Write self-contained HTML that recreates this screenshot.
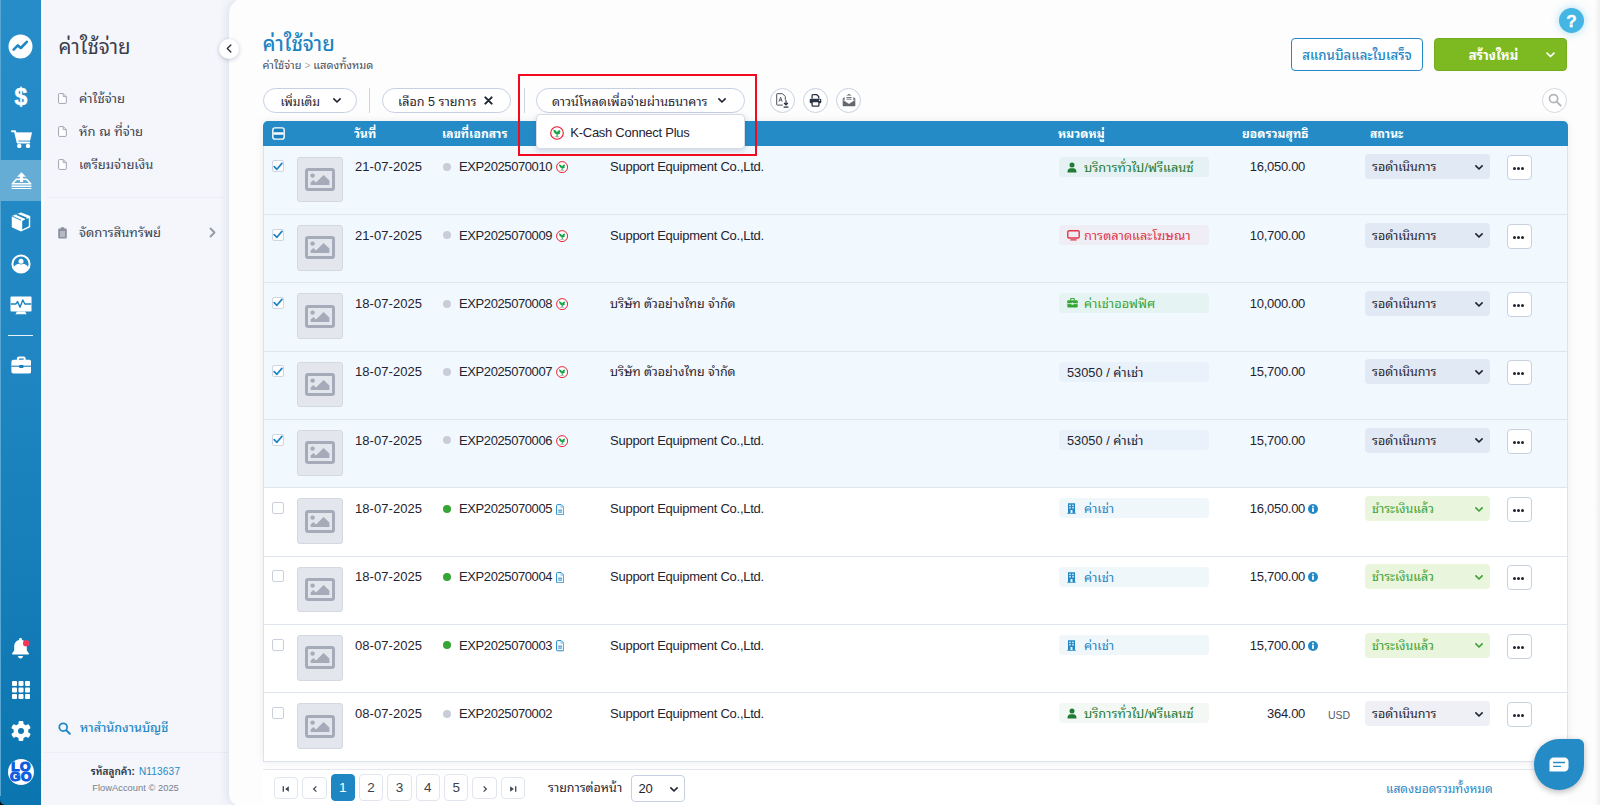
<!DOCTYPE html>
<html lang="th">
<head>
<meta charset="utf-8">
<title>ค่าใช้จ่าย</title>
<style>
*{box-sizing:border-box;margin:0;padding:0}
html,body{width:1600px;height:805px;overflow:hidden}
body{font-family:"Liberation Sans","Noto Sans Thai Looped","Noto Sans Thai","Sarabun","Loma",sans-serif;font-size:13px;color:#1f2430;background:#f4f6fb;position:relative}
svg{display:block}
/* ---------- rail ---------- */
#rail{position:absolute;left:0;top:0;width:42px;height:805px;background:linear-gradient(180deg,#268dc8 0%,#1f86c1 45%,#0b75af 100%);border-radius:0 0 0 5px}
#corner{position:absolute;left:0;top:797px;width:8px;height:8px;background:#000}
#rail .edge{position:absolute;left:0;top:0;width:1px;height:796px;background:#58a6d3}
#rail .active{position:absolute;left:0;top:160px;width:42px;height:41px;background:#66add6}
#rail .ic{position:absolute;left:0;width:41px;display:flex;justify-content:center}
#rail .sep{position:absolute;left:8px;width:25px;top:335px;height:1px;background:#e8f2f9}
/* ---------- sub nav ---------- */
#sub{position:absolute;left:41px;top:0;width:189px;height:805px;background:#f4f6fb}
#sub h2{position:absolute;left:17.5px;top:32.6px;font-size:20.4px;font-weight:400;color:#39404d;line-height:28px}
#sub .it{position:absolute;left:17px;margin-top:1px;height:20px;line-height:20px;font-size:13px;color:#3c4350;white-space:nowrap}
#sub .it svg{position:absolute;left:0;top:4px}
#sub .it span{position:absolute;left:21px;top:0}
#sub .hr{position:absolute;left:6px;right:6px;top:197px;height:1px;background:#eceff5}
#sub .hr2{position:absolute;left:0;right:0;top:752px;height:1px;background:#eceff5}
#sub .find{position:absolute;left:18px;top:718px;height:20px;line-height:20px;color:#2389c6;font-size:12.5px;white-space:nowrap}
#sub .find svg{position:absolute;left:-1px;top:3.5px}
#sub .find span{position:absolute;left:21px;font-weight:500}
#sub .cust{position:absolute;left:0;width:189px;top:764.5px;text-align:center;font-size:9.6px;line-height:14px;color:#2b303b;white-space:nowrap}
#sub .cust b{font-weight:600;font-size:10px}
#sub .cust a{color:#2389c6;margin-left:4px;letter-spacing:.2px;font-size:10px}
#sub .copy{position:absolute;left:0;width:189px;top:781px;text-align:center;font-size:9.4px;line-height:14px;color:#7a808c;white-space:nowrap}
/* ---------- main card ---------- */
#main{position:absolute;left:229px;top:-2px;width:1371px;height:807.5px;background:#fdfdfd;border-radius:16px 0 0 12px;box-shadow:-3px 0 8px rgba(60,80,120,.10)}
#strip{position:absolute;left:1594px;top:0;width:6px;height:805px;background:linear-gradient(90deg,rgba(250,250,250,0) 0%,#f5f5f5 70%,#eeeeee 100%)}
#collapse{position:absolute;left:219px;top:38.6px;width:20px;height:20px;border-radius:50%;background:#fff;box-shadow:0 1px 4px rgba(40,60,100,.28);display:flex;align-items:center;justify-content:center}
h1{position:absolute;left:262.5px;top:30px;font-size:20.1px;line-height:28px;font-weight:500;color:#1d84c3;white-space:nowrap}
#crumb{position:absolute;left:262.5px;top:57px;font-size:11px;line-height:16px;color:#4a505c;white-space:nowrap}
#crumb i{font-style:normal;color:#a9afbb;margin:0 3px;font-size:10px}
.pill{position:absolute;top:87.5px;height:25px;border:1px solid #c7d0e2;border-radius:13px;background:#fff;font-size:12.6px;line-height:23.5px;white-space:nowrap;color:#1f2430}
.pill span{position:absolute;top:2px}
.pill svg{position:absolute}
.vsep{position:absolute;top:87.5px;width:1px;height:25px;background:#ccd3df}
.circ{position:absolute;top:87.5px;width:25px;height:25px;border-radius:50%;border:1px solid #c7d0e2;background:#fff;display:flex;align-items:center;justify-content:center}
#scan{position:absolute;left:1291px;top:38px;width:132px;height:33px;border:1px solid #2389c6;border-radius:4px;background:#fff;color:#1f86c4;font-weight:500;font-size:13.2px;line-height:33.5px;text-align:center;white-space:nowrap}
#create{position:absolute;left:1434px;top:38px;width:133px;height:33px;border:1px solid #73ac1f;border-radius:4px;background:#7dba21;color:#fff;font-size:13px;font-weight:700;line-height:31px;white-space:nowrap}
#create span{position:absolute;left:0;top:1.4px;width:117px;text-align:center}
#create svg{position:absolute;left:110.5px;top:12.6px}
#help{position:absolute;left:1559px;top:8px;width:25px;height:25px;border-radius:50%;background:#45b5e4;box-shadow:0 0 8px rgba(69,181,228,.45);color:#fff;font-weight:700;font-size:17px;line-height:27px;text-align:center;-webkit-text-stroke:.4px #fff}
/* ---------- table ---------- */
#tbl{position:absolute;left:263px;top:121px;width:1305px;height:641px;border:1px solid #dde3ee;border-top:none;border-radius:5px 5px 0 0;box-shadow:0 0 8px rgba(0,0,0,.07);background:#fff}
#thead{position:absolute;left:263px;top:121px;width:1305px;height:25px;background:#248bc6;border-radius:5px 5px 0 0;color:#fff;font-weight:700;font-size:12.1px;line-height:25px}
#thead span{position:absolute;top:1.2px;white-space:nowrap}
.row{position:absolute;left:264px;width:1303px;border-top:1px solid #dfe5ee;background:#fff}
.row.first{border-top-color:transparent}
.row.sel{background:#f1f8fe}
.row>div{position:absolute}
.cb{left:8px;top:13.5px;width:12px;height:12px;border:1px solid #c9cfdb;border-radius:2px;background:#fff}
.cb.on{border-color:#cfd6e2}
.cb.on svg{position:absolute;left:0;top:0.5px}
.thumb{left:33px;top:10px;width:45.7px;height:45.6px;border:1px solid #d3d8e2;border-radius:3px;background:#e3e6ed;display:flex;align-items:center;justify-content:center}
.c{top:10.7px;height:20px;line-height:20px;font-size:13px;white-space:nowrap;color:#1f2430}
.date{left:91px;letter-spacing:.05px}
.dot{left:179px;top:16.2px;width:8px;height:8px;border-radius:50%}
.dot.gray{background:#c9cdd8}
.dot.green{background:#37a536}
.doc{left:195px;letter-spacing:-.4px}
.doc .kic{position:absolute;left:97.2px;top:4.1px}
.doc .dic{position:absolute;left:96.5px;top:4.5px}
.ven{left:346px;letter-spacing:-.25px}
.ven.th{letter-spacing:0;font-size:12.5px}
.cat{left:795px;top:10px;width:150px;height:20px;border-radius:4px;font-size:12.8px;line-height:21px;white-space:nowrap}
.cat svg{position:absolute;left:8px;top:5px}
.cat span{position:absolute;left:25px;top:0}
.cat.noic span{left:8px}
.amt{left:940px;width:101px;text-align:right;letter-spacing:-.3px}
.info{left:1044px;top:15.8px}
.usd{left:1064px;top:11.3px;font-size:10.5px;line-height:20px;color:#555c69}
.st{left:1101px;top:7.7px;width:125px;height:25px;border-radius:4px;font-size:12.5px;line-height:26.5px;white-space:nowrap}
.st span{position:absolute;left:7px;top:0}
.st .chev{position:absolute;left:110px;top:10.5px}
.st.pend{background:rgba(70,90,140,.09);color:#1f2430}
.st.paid{background:#eaf5de;color:#3aa335}
.more{left:1242.6px;top:8.5px;width:25px;height:25px;border:1px solid #c9d1e0;border-radius:4px;background:#fff}
.more i{position:absolute;top:11px;width:3px;height:3px;border-radius:50%;background:#1f2430}
.more i:nth-child(1){left:5.8px}.more i:nth-child(2){left:9.8px}.more i:nth-child(3){left:13.8px}
/* ---------- pagination ---------- */
#pgline{position:absolute;left:263px;top:769px;width:1305px;height:1px;background:#e3e7ef}
.pg{position:absolute;top:774px;width:24.5px;height:27px;border:1px solid #e1e5ee;border-radius:4px;background:#fff;font-size:13.5px;line-height:25.5px;text-align:center;color:#3c4350}
.pg.ar{top:777px;height:22px}
.pg.ar svg{top:-1.6px;left:-.5px}
.pg.on{background:#1f86c4;border-color:#1f86c4;color:#fff}
.pg svg{position:absolute;left:0;top:0}
#perpage{position:absolute;left:548px;top:778px;font-size:12.5px;line-height:20px;white-space:nowrap;color:#1f2430}
#psel{position:absolute;left:631.4px;top:775px;width:53.6px;height:26.5px;border:1px solid #c7d0e2;border-radius:4px;background:#fff;font-size:13px;line-height:26px}
#psel span{position:absolute;left:6px}
#psel svg{position:absolute;left:38px;top:10.5px}
#total{position:absolute;left:1386px;top:778.5px;font-size:12px;line-height:20px;color:#1f86c4;white-space:nowrap}
#chat{position:absolute;left:1534px;top:739px;width:50px;height:51px;border-radius:26px 6px 26px 26px;background:#258bc6;box-shadow:0 2px 6px rgba(0,0,0,.28);display:flex;align-items:center;justify-content:center}
/* ---------- dropdown + highlight ---------- */
#menu{position:absolute;left:536px;top:114px;width:209px;height:35px;border:1px solid #d5dbe7;border-radius:4px;background:#fff;box-shadow:0 2px 5px rgba(40,60,100,.18);font-size:13px;line-height:34px}
#menu svg{position:absolute;left:13px;top:11px}
#menu span{position:absolute;left:33.3px;top:.7px;white-space:nowrap;letter-spacing:-.27px}
#red{position:absolute;left:518px;top:74px;width:239px;height:82px;border:2px solid #f20a20}
</style>
</head>
<body>
<div id="rail"><div class="edge"></div><div class="active"></div><div class="sep"></div>
<!--RAIL-S-->
<svg style="position:absolute;left:8px;top:34px" width="25" height="25" viewBox="0 0 25 25"><circle cx="12.5" cy="12.5" r="12" fill="#fff"/><path d="M5.6 15.6l4.2-4.2 3 2.6 6-6.2" fill="none" stroke="#1f86c4" stroke-width="2.6" stroke-linecap="round" stroke-linejoin="round"/></svg>
<div style="position:absolute;left:0;top:84px;width:42px;text-align:center;color:#fff;font-weight:700;font-size:23px;line-height:26px;-webkit-text-stroke:.5px #fff">$</div>
<svg style="position:absolute;left:10.5px;top:129.5px" width="21" height="18.4" viewBox="0 0 21 18.4"><path d="M1 1.2h3l2.7 11.3h11.5" fill="none" stroke="#fff" stroke-width="2" stroke-linejoin="round" stroke-linecap="round"/><path d="M4.4 2.7h16.3l-1.8 7.6H6.2z" fill="#fff" stroke="#fff" stroke-width=".6" stroke-linejoin="round"/><circle cx="8.3" cy="15.9" r="2.2" fill="#fff"/><circle cx="17" cy="15.9" r="2.2" fill="#fff"/></svg>
<svg style="position:absolute;left:10.5px;top:172px" width="21" height="17.2" viewBox="0 0 21 17.2"><path fill-rule="evenodd" d="M5 6.4H16L20.4 11.4V12.6H.6V11.4zM5.9 7.9L3 11.1H18L15.1 7.9z" fill="#fff"/><path d="M10.5.2l4.4 4.5h-2.8v5.4H8.9V4.7H6.1z" fill="#fff"/><rect x=".6" y="13.5" width="19.8" height="1.5" fill="#fff"/><rect x=".6" y="16" width="19.8" height="1.1" fill="#fff"/></svg>
<svg style="position:absolute;left:11px;top:212px" width="20" height="20" viewBox="0 0 20 20"><path d="M10 .4l9.2 3.6v11.2L10 19.6.8 15.2V4z" fill="#fff"/><path d="M11.2 8.9l6.6-2.9v8.3l-6.6 3.2z" fill="#1d84bf"/><path d="M.8 4L10 8.2" fill="none" stroke="#1d84bf" stroke-width=".9"/><path d="M5.6 2.2l9.2 3.9v2.6" fill="none" stroke="#1d84bf" stroke-width="1.7"/></svg>
<svg style="position:absolute;left:11px;top:254px" width="20" height="20" viewBox="0 0 20 20"><circle cx="10" cy="10" r="8.6" fill="none" stroke="#fff" stroke-width="2"/><circle cx="10" cy="7.2" r="2.5" fill="#fff" stroke="#1c83be" stroke-width="0"/><path d="M2.6 13.6c1.2-2.6 3.6-3.8 5.4-3.8.6.5 1.2.8 2 .8s1.4-.3 2-.8c1.8 0 4.2 1.2 5.4 3.8-1.5 2.9-4.3 4.6-7.4 4.6s-5.9-1.7-7.4-4.6z" fill="#fff"/></svg>
<svg style="position:absolute;left:10px;top:296px" width="22" height="19" viewBox="0 0 22 19"><rect x=".5" y=".6" width="21" height="15" rx=".8" fill="#fff"/><path d="M7 15.4h8l1.6 2.9H5.4z" fill="#fff"/><path d="M.8 8h5l1.8-2.4 2.4 5.6 2.8-7.2 2 4h6.4" fill="none" stroke="#1c82bd" stroke-width="1.4" stroke-linejoin="round"/></svg>
<svg style="position:absolute;left:10.6px;top:356px" width="20.6" height="18" viewBox="0 0 22 19"><path d="M7.4 4.2V2.6c0-.7.5-1.2 1.2-1.2h4.8c.7 0 1.2.5 1.2 1.2v1.6" fill="none" stroke="#fff" stroke-width="2.2"/><rect x=".4" y="4" width="21.2" height="14.6" rx="2.2" fill="#fff"/><rect x=".4" y="10.2" width="21.2" height="1.2" fill="#1a7fb9"/><rect x="8.8" y="9.6" width="4.4" height="3.2" rx=".4" fill="#1a7fb9"/></svg>
<svg style="position:absolute;left:11px;top:637px" width="20" height="23" viewBox="0 0 20 23"><path d="M9.5 1.1c.9 0 1.5.6 1.5 1.4v.6c2.9.7 4.8 3.1 4.8 6.1v4.2l2 2.8c.4.6 0 1.3-.7 1.3H1.9c-.7 0-1.1-.7-.7-1.3l2-2.8V9.2c0-3 1.9-5.4 4.8-6.1v-.6c0-.8.6-1.4 1.5-1.4z" fill="#fff"/><path d="M7 19h5c0 1.4-1.1 2.5-2.5 2.5S7 20.4 7 19z" fill="#fff"/><circle cx="15.2" cy="6.2" r="3.2" fill="#f4365c"/></svg>
<svg style="position:absolute;left:12px;top:681px" width="18" height="18" viewBox="0 0 18 18"><g fill="#fff"><rect x="0" y="0" width="5" height="5" rx="1"/><rect x="6.5" y="0" width="5" height="5" rx="1"/><rect x="13" y="0" width="5" height="5" rx="1"/><rect x="0" y="6.5" width="5" height="5" rx="1"/><rect x="6.5" y="6.5" width="5" height="5" rx="1"/><rect x="13" y="6.5" width="5" height="5" rx="1"/><rect x="0" y="13" width="5" height="5" rx="1"/><rect x="6.5" y="13" width="5" height="5" rx="1"/><rect x="13" y="13" width="5" height="5" rx="1"/></g></svg>
<svg style="position:absolute;left:11px;top:721px" width="20" height="20" viewBox="0 0 20 20"><g transform="translate(10 10)"><g fill="#fff"><rect x="-2.4" y="-10" width="4.8" height="20" rx="1.2"/><rect x="-2.4" y="-10" width="4.8" height="20" rx="1.2" transform="rotate(60)"/><rect x="-2.4" y="-10" width="4.8" height="20" rx="1.2" transform="rotate(120)"/><circle r="7.4"/></g><circle r="3" fill="#0f79b3"/></g></svg>
<div style="position:absolute;left:8px;top:759px;width:26px;height:26px;border-radius:50%;background:#fff;overflow:hidden"><div style="position:absolute;left:-7px;top:2.6px;width:40px;text-align:center;color:#0a5ce0;font-weight:700;font-size:12px;line-height:10.6px;letter-spacing:.4px;-webkit-text-stroke:1.1px #0a5ce0;transform:scaleX(1.12)">LO<br>GO</div></div>
<!--RAIL-E-->
</div>
<div id="corner" style="z-index:-1"></div>
<div style="position:absolute;left:42px;top:0;width:1px;height:805px;background:#fcfdff;z-index:2"></div>
<div id="sub">
  <h2>ค่าใช้จ่าย</h2>
  <div class="it" style="top:88px"><svg width="9" height="11" viewBox="0 0 9 11"><path d="M1.3.6h4l3 3v6.1c0 .4-.3.7-.7.7H1.3c-.4 0-.7-.3-.7-.7V1.3c0-.4.3-.7.7-.7z" fill="#fff" stroke="#9da3b0" stroke-width="1"/><path d="M5.2.8v2.8h2.9" fill="none" stroke="#9da3b0" stroke-width=".9"/></svg><span>ค่าใช้จ่าย</span></div>
  <div class="it" style="top:121px"><svg width="9" height="11" viewBox="0 0 9 11"><path d="M1.3.6h4l3 3v6.1c0 .4-.3.7-.7.7H1.3c-.4 0-.7-.3-.7-.7V1.3c0-.4.3-.7.7-.7z" fill="#fff" stroke="#9da3b0" stroke-width="1"/><path d="M5.2.8v2.8h2.9" fill="none" stroke="#9da3b0" stroke-width=".9"/></svg><span>หัก ณ ที่จ่าย</span></div>
  <div class="it" style="top:154px"><svg width="9" height="11" viewBox="0 0 9 11"><path d="M1.3.6h4l3 3v6.1c0 .4-.3.7-.7.7H1.3c-.4 0-.7-.3-.7-.7V1.3c0-.4.3-.7.7-.7z" fill="#fff" stroke="#9da3b0" stroke-width="1"/><path d="M5.2.8v2.8h2.9" fill="none" stroke="#9da3b0" stroke-width=".9"/></svg><span>เตรียมจ่ายเงิน</span></div>
  <div class="hr"></div>
  <div class="it" style="top:222px"><svg width="9" height="12" viewBox="0 0 9 12"><rect x=".2" y="1.6" width="8.6" height="10" rx="1" fill="#8b919e"/><rect x="2.6" y=".2" width="3.8" height="2.6" rx=".8" fill="#8b919e"/><path d="M2 5h5M2 7h5M2 9h5" stroke="#f4f6fb" stroke-width=".8"/></svg><span>จัดการสินทรัพย์</span></div>
  <svg style="position:absolute;left:168px;top:227px" width="7" height="11" viewBox="0 0 7 11"><path d="M1.5 1.5l4 4-4 4" fill="none" stroke="#9299a6" stroke-width="1.8" stroke-linecap="round" stroke-linejoin="round"/></svg>
  <div class="find"><svg width="13" height="13" viewBox="0 0 13 13"><circle cx="5.2" cy="5.2" r="3.9" fill="none" stroke="#2389c6" stroke-width="1.8"/><path d="M8.2 8.2l3.6 3.6" stroke="#2389c6" stroke-width="2" stroke-linecap="round"/></svg><span>หาสำนักงานบัญชี</span></div>
  <div class="hr2"></div>
  <div class="cust"><b>รหัสลูกค้า:</b><a>N113637</a></div>
  <div class="copy">FlowAccount © 2025</div>
</div>
<div id="main"></div>
<div id="strip"></div>
<div id="collapse"><svg width="6" height="9" viewBox="0 0 6 9"><path d="M4.8 1L1.3 4.5 4.8 8" fill="none" stroke="#2b3140" stroke-width="1.4" stroke-linecap="round" stroke-linejoin="round"/></svg></div>

<h1>ค่าใช้จ่าย</h1>
<div id="crumb">ค่าใช้จ่าย<i>&gt;</i>แสดงทั้งหมด</div>
<div id="scan">สแกนบิลและใบเสร็จ</div>
<div id="create"><span>สร้างใหม่</span><svg width="9" height="6.3" viewBox="0 0 10 7"><path d="M1.2 1.2L5 5l3.8-3.8" fill="none" stroke="#fff" stroke-width="1.9" stroke-linecap="round" stroke-linejoin="round"/></svg></div>
<div id="help">?</div>

<div class="pill" style="left:263px;width:94px"><span style="left:16.5px;font-size:12.1px">เพิ่มเติม</span><svg style="left:68.5px;top:9.5px" width="8" height="5.4" viewBox="0 0 9 6"><path d="M1 1l3.5 3.5L8 1" fill="none" stroke="#1f2430" stroke-width="1.8" stroke-linecap="round" stroke-linejoin="round"/></svg></div>
<div class="vsep" style="left:369px"></div>
<div class="pill" style="left:382px;width:129px"><span style="left:15px">เลือก 5 รายการ</span><svg style="left:101px;top:7.5px" width="9" height="9" viewBox="0 0 10 10"><path d="M1.5 1.5l7 7M8.5 1.5l-7 7" stroke="#1f2430" stroke-width="2.2" stroke-linecap="round"/></svg></div>
<div class="vsep" style="left:524px"></div>
<div class="pill" style="left:536px;width:209px"><span style="left:15px">ดาวน์โหลดเพื่อจ่ายผ่านธนาคาร</span><svg style="left:180.5px;top:9.5px" width="8" height="5.4" viewBox="0 0 9 6"><path d="M1 1l3.5 3.5L8 1" fill="none" stroke="#1f2430" stroke-width="1.8" stroke-linecap="round" stroke-linejoin="round"/></svg></div>
<div class="circ" style="left:769.7px"><svg width="13" height="15" viewBox="0 0 13 15"><path d="M1.2.7h5.3l2.8 2.8v3.4M1.2.7C.9.7.7.9.7 1.2v10.4c0 .3.2.5.5.5h5.6" fill="none" stroke="#4a505c" stroke-width="1"/><path d="M3 8.6l1.6-4.4 1.6 4.4M3.6 7.2h2" fill="none" stroke="#4a505c" stroke-width=".9"/><path d="M10 7.3v4.4M8.1 10l1.9 2 1.9-2M7.6 14.2h4.8" fill="none" stroke="#2b3140" stroke-width="1.2"/></svg></div>
<div class="circ" style="left:802.8px"><svg width="13" height="13" viewBox="0 0 13 13"><path d="M3.1 4.6V1.4c0-.4.3-.7.7-.7h4l1.9 1.8v2.1" fill="#fff" stroke="#2b3445" stroke-width="1.3"/><rect x=".7" y="4.7" width="11.6" height="4.6" rx="1.3" fill="#2b3445"/><rect x="3.1" y="7.5" width="6.8" height="4.6" rx=".5" fill="#fff" stroke="#2b3445" stroke-width="1.3"/><circle cx="10.5" cy="6.3" r=".7" fill="#fff"/></svg></div>
<div class="circ" style="left:836.3px"><svg width="14" height="14" viewBox="0 0 14 14"><path d="M.7 5.4L7 .7l6.3 4.7v7c0 .5-.4.9-.9.9H1.6c-.5 0-.9-.4-.9-.9z" fill="#63676e"/><path d="M2.6 2.6h8.8v5.2L7 10.4 2.6 7.8z" fill="#fff"/><path d="M4.4 4.5h5.2M4.4 6.2h5.2" stroke="#63676e" stroke-width=".9"/><path d="M1 6.8l6 3.8 6-3.8" fill="none" stroke="#fff" stroke-width=".6"/></svg></div>
<div class="circ" style="left:1542px;border-color:#d5d8de"><svg width="14" height="14" viewBox="0 0 12 12"><circle cx="4.8" cy="4.8" r="3.5" fill="none" stroke="#b3b7bf" stroke-width="1.5"/><path d="M7.5 7.5l3.3 3.3" stroke="#b3b7bf" stroke-width="1.7" stroke-linecap="round"/></svg></div>

<div id="tbl"></div>
<div class="row sel first" style="top:145.70px;height:68.33px">
<div class="cb on"><svg width="10" height="9" viewBox="0 0 10 9"><path d="M1.2 4.6l2.7 2.7L8.9 1.4" fill="none" stroke="#1b84c4" stroke-width="1.7" stroke-linecap="round" stroke-linejoin="round"/></svg></div>
<div class="thumb"><svg width="30" height="23" viewBox="0 0 30 23"><rect x="1.5" y="1.5" width="27" height="20" rx="1.8" fill="none" stroke="#a5abb8" stroke-width="3"/><circle cx="7.6" cy="7.6" r="2.2" fill="#a5abb8"/><path d="M5.6 17V14.6l2.8-2.6 2.6 2.4 7.6-7.4 5.8 5.6V17z" fill="#a5abb8"/></svg></div>
<div class="c date">21-07-2025</div>
<div class="dot gray"></div>
<div class="c doc"><span>EXP2025070010</span><svg class="kic" width="12.2" height="12.2" viewBox="0 0 14 14"><circle cx="7" cy="7" r="6.3" fill="#fff" stroke="#f0142c" stroke-width="1.1"/><ellipse cx="7" cy="10.7" rx="2.7" ry=".7" fill="#b4bcbc"/><path d="M6.5 10.4V8.1C4.7 7.9 3.5 6.3 3.4 3.8c1.7.2 2.9 1 3.5 2.4C7.5 4.9 8.6 4 10.4 3.9c0 1.2-.4 2.1-1.2 2.7.5 0 .9-.1 1.3-.3-.3 1.5-1.4 2.2-2.9 2.2v1.9z" fill="#17a34a"/></svg></div>
<div class="c ven">Support Equipment Co.,Ltd.</div>
<div class="cat" style="background:rgba(31,122,53,.05);color:#1f7a35"><svg width="10" height="11" viewBox="0 0 10 11"><circle cx="5" cy="2.9" r="2.5" fill="#1f7a35"/><path d="M0.6 10.6v-1.4c0-1.7 1.5-2.9 3-2.9h2.8c1.5 0 3 1.2 3 2.9v1.4z" fill="#1f7a35"/></svg><span>บริการทั่วไป/ฟรีแลนซ์</span></div>
<div class="c amt">16,050.00</div>
<div class="st pend"><span>รอดำเนินการ</span><svg class="chev" width="8" height="5.4" viewBox="0 0 9 6"><path d="M1 1l3.5 3.5L8 1" fill="none" stroke="#1f2430" stroke-width="1.8" stroke-linecap="round" stroke-linejoin="round"/></svg></div>
<div class="more"><i></i><i></i><i></i></div>
</div>
<div class="row sel" style="top:214.03px;height:68.33px">
<div class="cb on"><svg width="10" height="9" viewBox="0 0 10 9"><path d="M1.2 4.6l2.7 2.7L8.9 1.4" fill="none" stroke="#1b84c4" stroke-width="1.7" stroke-linecap="round" stroke-linejoin="round"/></svg></div>
<div class="thumb"><svg width="30" height="23" viewBox="0 0 30 23"><rect x="1.5" y="1.5" width="27" height="20" rx="1.8" fill="none" stroke="#a5abb8" stroke-width="3"/><circle cx="7.6" cy="7.6" r="2.2" fill="#a5abb8"/><path d="M5.6 17V14.6l2.8-2.6 2.6 2.4 7.6-7.4 5.8 5.6V17z" fill="#a5abb8"/></svg></div>
<div class="c date">21-07-2025</div>
<div class="dot gray"></div>
<div class="c doc"><span>EXP2025070009</span><svg class="kic" width="12.2" height="12.2" viewBox="0 0 14 14"><circle cx="7" cy="7" r="6.3" fill="#fff" stroke="#f0142c" stroke-width="1.1"/><ellipse cx="7" cy="10.7" rx="2.7" ry=".7" fill="#b4bcbc"/><path d="M6.5 10.4V8.1C4.7 7.9 3.5 6.3 3.4 3.8c1.7.2 2.9 1 3.5 2.4C7.5 4.9 8.6 4 10.4 3.9c0 1.2-.4 2.1-1.2 2.7.5 0 .9-.1 1.3-.3-.3 1.5-1.4 2.2-2.9 2.2v1.9z" fill="#17a34a"/></svg></div>
<div class="c ven">Support Equipment Co.,Ltd.</div>
<div class="cat" style="background:rgba(224,55,74,.05);color:#e0374a"><svg width="13" height="11" viewBox="0 0 13 11"><rect x="0.8" y="0.8" width="11.4" height="7.2" rx="1.2" fill="none" stroke="#e0374a" stroke-width="1.4"/><rect x="3.2" y="9.3" width="6.6" height="1.3" rx=".6" fill="#e0374a"/></svg><span>การตลาดและโฆษณา</span></div>
<div class="c amt">10,700.00</div>
<div class="st pend"><span>รอดำเนินการ</span><svg class="chev" width="8" height="5.4" viewBox="0 0 9 6"><path d="M1 1l3.5 3.5L8 1" fill="none" stroke="#1f2430" stroke-width="1.8" stroke-linecap="round" stroke-linejoin="round"/></svg></div>
<div class="more"><i></i><i></i><i></i></div>
</div>
<div class="row sel" style="top:282.36px;height:68.33px">
<div class="cb on"><svg width="10" height="9" viewBox="0 0 10 9"><path d="M1.2 4.6l2.7 2.7L8.9 1.4" fill="none" stroke="#1b84c4" stroke-width="1.7" stroke-linecap="round" stroke-linejoin="round"/></svg></div>
<div class="thumb"><svg width="30" height="23" viewBox="0 0 30 23"><rect x="1.5" y="1.5" width="27" height="20" rx="1.8" fill="none" stroke="#a5abb8" stroke-width="3"/><circle cx="7.6" cy="7.6" r="2.2" fill="#a5abb8"/><path d="M5.6 17V14.6l2.8-2.6 2.6 2.4 7.6-7.4 5.8 5.6V17z" fill="#a5abb8"/></svg></div>
<div class="c date">18-07-2025</div>
<div class="dot gray"></div>
<div class="c doc"><span>EXP2025070008</span><svg class="kic" width="12.2" height="12.2" viewBox="0 0 14 14"><circle cx="7" cy="7" r="6.3" fill="#fff" stroke="#f0142c" stroke-width="1.1"/><ellipse cx="7" cy="10.7" rx="2.7" ry=".7" fill="#b4bcbc"/><path d="M6.5 10.4V8.1C4.7 7.9 3.5 6.3 3.4 3.8c1.7.2 2.9 1 3.5 2.4C7.5 4.9 8.6 4 10.4 3.9c0 1.2-.4 2.1-1.2 2.7.5 0 .9-.1 1.3-.3-.3 1.5-1.4 2.2-2.9 2.2v1.9z" fill="#17a34a"/></svg></div>
<div class="c ven th">บริษัท ตัวอย่างไทย จำกัด</div>
<div class="cat" style="background:rgba(55,165,54,.055);color:#37a536"><svg width="11" height="10" viewBox="0 0 11 10"><path d="M3.6 2.2V1.4c0-.5.4-.9.9-.9h2c.5 0 .9.4.9.9v.8" fill="none" stroke="#37a536" stroke-width="1.1"/><rect x="0.3" y="2.2" width="10.4" height="7.4" rx="1.1" fill="#37a536"/><rect x="0.3" y="5.3" width="10.4" height=".8" fill="#e9f7ee"/><rect x="4.5" y="4.7" width="2" height="2" fill="#e9f7ee"/></svg><span>ค่าเช่าออฟฟิศ</span></div>
<div class="c amt">10,000.00</div>
<div class="st pend"><span>รอดำเนินการ</span><svg class="chev" width="8" height="5.4" viewBox="0 0 9 6"><path d="M1 1l3.5 3.5L8 1" fill="none" stroke="#1f2430" stroke-width="1.8" stroke-linecap="round" stroke-linejoin="round"/></svg></div>
<div class="more"><i></i><i></i><i></i></div>
</div>
<div class="row sel" style="top:350.69px;height:68.33px">
<div class="cb on"><svg width="10" height="9" viewBox="0 0 10 9"><path d="M1.2 4.6l2.7 2.7L8.9 1.4" fill="none" stroke="#1b84c4" stroke-width="1.7" stroke-linecap="round" stroke-linejoin="round"/></svg></div>
<div class="thumb"><svg width="30" height="23" viewBox="0 0 30 23"><rect x="1.5" y="1.5" width="27" height="20" rx="1.8" fill="none" stroke="#a5abb8" stroke-width="3"/><circle cx="7.6" cy="7.6" r="2.2" fill="#a5abb8"/><path d="M5.6 17V14.6l2.8-2.6 2.6 2.4 7.6-7.4 5.8 5.6V17z" fill="#a5abb8"/></svg></div>
<div class="c date">18-07-2025</div>
<div class="dot gray"></div>
<div class="c doc"><span>EXP2025070007</span><svg class="kic" width="12.2" height="12.2" viewBox="0 0 14 14"><circle cx="7" cy="7" r="6.3" fill="#fff" stroke="#f0142c" stroke-width="1.1"/><ellipse cx="7" cy="10.7" rx="2.7" ry=".7" fill="#b4bcbc"/><path d="M6.5 10.4V8.1C4.7 7.9 3.5 6.3 3.4 3.8c1.7.2 2.9 1 3.5 2.4C7.5 4.9 8.6 4 10.4 3.9c0 1.2-.4 2.1-1.2 2.7.5 0 .9-.1 1.3-.3-.3 1.5-1.4 2.2-2.9 2.2v1.9z" fill="#17a34a"/></svg></div>
<div class="c ven th">บริษัท ตัวอย่างไทย จำกัด</div>
<div class="cat noic" style="background:rgba(90,130,200,.05);color:#1f2430"><span>53050 / ค่าเช่า</span></div>
<div class="c amt">15,700.00</div>
<div class="st pend"><span>รอดำเนินการ</span><svg class="chev" width="8" height="5.4" viewBox="0 0 9 6"><path d="M1 1l3.5 3.5L8 1" fill="none" stroke="#1f2430" stroke-width="1.8" stroke-linecap="round" stroke-linejoin="round"/></svg></div>
<div class="more"><i></i><i></i><i></i></div>
</div>
<div class="row sel" style="top:419.02px;height:68.33px">
<div class="cb on"><svg width="10" height="9" viewBox="0 0 10 9"><path d="M1.2 4.6l2.7 2.7L8.9 1.4" fill="none" stroke="#1b84c4" stroke-width="1.7" stroke-linecap="round" stroke-linejoin="round"/></svg></div>
<div class="thumb"><svg width="30" height="23" viewBox="0 0 30 23"><rect x="1.5" y="1.5" width="27" height="20" rx="1.8" fill="none" stroke="#a5abb8" stroke-width="3"/><circle cx="7.6" cy="7.6" r="2.2" fill="#a5abb8"/><path d="M5.6 17V14.6l2.8-2.6 2.6 2.4 7.6-7.4 5.8 5.6V17z" fill="#a5abb8"/></svg></div>
<div class="c date">18-07-2025</div>
<div class="dot gray"></div>
<div class="c doc"><span>EXP2025070006</span><svg class="kic" width="12.2" height="12.2" viewBox="0 0 14 14"><circle cx="7" cy="7" r="6.3" fill="#fff" stroke="#f0142c" stroke-width="1.1"/><ellipse cx="7" cy="10.7" rx="2.7" ry=".7" fill="#b4bcbc"/><path d="M6.5 10.4V8.1C4.7 7.9 3.5 6.3 3.4 3.8c1.7.2 2.9 1 3.5 2.4C7.5 4.9 8.6 4 10.4 3.9c0 1.2-.4 2.1-1.2 2.7.5 0 .9-.1 1.3-.3-.3 1.5-1.4 2.2-2.9 2.2v1.9z" fill="#17a34a"/></svg></div>
<div class="c ven">Support Equipment Co.,Ltd.</div>
<div class="cat noic" style="background:rgba(90,130,200,.05);color:#1f2430"><span>53050 / ค่าเช่า</span></div>
<div class="c amt">15,700.00</div>
<div class="st pend"><span>รอดำเนินการ</span><svg class="chev" width="8" height="5.4" viewBox="0 0 9 6"><path d="M1 1l3.5 3.5L8 1" fill="none" stroke="#1f2430" stroke-width="1.8" stroke-linecap="round" stroke-linejoin="round"/></svg></div>
<div class="more"><i></i><i></i><i></i></div>
</div>
<div class="row" style="top:487.35px;height:68.33px">
<div class="cb"></div>
<div class="thumb"><svg width="30" height="23" viewBox="0 0 30 23"><rect x="1.5" y="1.5" width="27" height="20" rx="1.8" fill="none" stroke="#a5abb8" stroke-width="3"/><circle cx="7.6" cy="7.6" r="2.2" fill="#a5abb8"/><path d="M5.6 17V14.6l2.8-2.6 2.6 2.4 7.6-7.4 5.8 5.6V17z" fill="#a5abb8"/></svg></div>
<div class="c date">18-07-2025</div>
<div class="dot green"></div>
<div class="c doc"><span>EXP2025070005</span><svg class="dic" width="8.4" height="11.4" viewBox="0 0 8.4 11.4"><path d="M1.3.6h3.9L7.8 3.2v6.9c0 .4-.3.7-.7.7H1.3c-.4 0-.7-.3-.7-.7V1.3c0-.4.3-.7.7-.7z" fill="#f4fafe" stroke="#2389c6" stroke-width="1"/><path d="M5 .8v2.6h2.6" fill="none" stroke="#7ab8de" stroke-width=".7"/><path d="M2.3 6.2h3.8M2.3 8.1h3.8" stroke="#2389c6" stroke-width="1"/></svg></div>
<div class="c ven">Support Equipment Co.,Ltd.</div>
<div class="cat" style="background:rgba(35,137,198,.07);color:#2389c6"><svg width="9" height="11" viewBox="0 0 9 11"><path d="M1 .3h7v9.6h.8v.9H.2v-.9H1z" fill="#2389c6"/><g fill="#eef7fd"><rect x="2.3" y="1.7" width="1.5" height="1.4"/><rect x="5.2" y="1.7" width="1.5" height="1.4"/><rect x="2.3" y="4.1" width="1.5" height="1.4"/><rect x="5.2" y="4.1" width="1.5" height="1.4"/><rect x="3.5" y="7" width="2" height="3"/></g></svg><span>ค่าเช่า</span></div>
<div class="c amt">16,050.00</div>
<div class="info"><svg width="10" height="10" viewBox="0 0 10 10"><circle cx="5" cy="5" r="5" fill="#2389c6"/><rect x="4.1" y="4.1" width="1.8" height="3.8" fill="#fff"/><circle cx="5" cy="2.6" r="1" fill="#fff"/></svg></div>
<div class="st paid"><span>ชำระเงินแล้ว</span><svg class="chev" width="8" height="5.4" viewBox="0 0 9 6"><path d="M1 1l3.5 3.5L8 1" fill="none" stroke="#3aa335" stroke-width="1.8" stroke-linecap="round" stroke-linejoin="round"/></svg></div>
<div class="more"><i></i><i></i><i></i></div>
</div>
<div class="row" style="top:555.68px;height:68.33px">
<div class="cb"></div>
<div class="thumb"><svg width="30" height="23" viewBox="0 0 30 23"><rect x="1.5" y="1.5" width="27" height="20" rx="1.8" fill="none" stroke="#a5abb8" stroke-width="3"/><circle cx="7.6" cy="7.6" r="2.2" fill="#a5abb8"/><path d="M5.6 17V14.6l2.8-2.6 2.6 2.4 7.6-7.4 5.8 5.6V17z" fill="#a5abb8"/></svg></div>
<div class="c date">18-07-2025</div>
<div class="dot green"></div>
<div class="c doc"><span>EXP2025070004</span><svg class="dic" width="8.4" height="11.4" viewBox="0 0 8.4 11.4"><path d="M1.3.6h3.9L7.8 3.2v6.9c0 .4-.3.7-.7.7H1.3c-.4 0-.7-.3-.7-.7V1.3c0-.4.3-.7.7-.7z" fill="#f4fafe" stroke="#2389c6" stroke-width="1"/><path d="M5 .8v2.6h2.6" fill="none" stroke="#7ab8de" stroke-width=".7"/><path d="M2.3 6.2h3.8M2.3 8.1h3.8" stroke="#2389c6" stroke-width="1"/></svg></div>
<div class="c ven">Support Equipment Co.,Ltd.</div>
<div class="cat" style="background:rgba(35,137,198,.07);color:#2389c6"><svg width="9" height="11" viewBox="0 0 9 11"><path d="M1 .3h7v9.6h.8v.9H.2v-.9H1z" fill="#2389c6"/><g fill="#eef7fd"><rect x="2.3" y="1.7" width="1.5" height="1.4"/><rect x="5.2" y="1.7" width="1.5" height="1.4"/><rect x="2.3" y="4.1" width="1.5" height="1.4"/><rect x="5.2" y="4.1" width="1.5" height="1.4"/><rect x="3.5" y="7" width="2" height="3"/></g></svg><span>ค่าเช่า</span></div>
<div class="c amt">15,700.00</div>
<div class="info"><svg width="10" height="10" viewBox="0 0 10 10"><circle cx="5" cy="5" r="5" fill="#2389c6"/><rect x="4.1" y="4.1" width="1.8" height="3.8" fill="#fff"/><circle cx="5" cy="2.6" r="1" fill="#fff"/></svg></div>
<div class="st paid"><span>ชำระเงินแล้ว</span><svg class="chev" width="8" height="5.4" viewBox="0 0 9 6"><path d="M1 1l3.5 3.5L8 1" fill="none" stroke="#3aa335" stroke-width="1.8" stroke-linecap="round" stroke-linejoin="round"/></svg></div>
<div class="more"><i></i><i></i><i></i></div>
</div>
<div class="row" style="top:624.01px;height:68.33px">
<div class="cb"></div>
<div class="thumb"><svg width="30" height="23" viewBox="0 0 30 23"><rect x="1.5" y="1.5" width="27" height="20" rx="1.8" fill="none" stroke="#a5abb8" stroke-width="3"/><circle cx="7.6" cy="7.6" r="2.2" fill="#a5abb8"/><path d="M5.6 17V14.6l2.8-2.6 2.6 2.4 7.6-7.4 5.8 5.6V17z" fill="#a5abb8"/></svg></div>
<div class="c date">08-07-2025</div>
<div class="dot green"></div>
<div class="c doc"><span>EXP2025070003</span><svg class="dic" width="8.4" height="11.4" viewBox="0 0 8.4 11.4"><path d="M1.3.6h3.9L7.8 3.2v6.9c0 .4-.3.7-.7.7H1.3c-.4 0-.7-.3-.7-.7V1.3c0-.4.3-.7.7-.7z" fill="#f4fafe" stroke="#2389c6" stroke-width="1"/><path d="M5 .8v2.6h2.6" fill="none" stroke="#7ab8de" stroke-width=".7"/><path d="M2.3 6.2h3.8M2.3 8.1h3.8" stroke="#2389c6" stroke-width="1"/></svg></div>
<div class="c ven">Support Equipment Co.,Ltd.</div>
<div class="cat" style="background:rgba(35,137,198,.07);color:#2389c6"><svg width="9" height="11" viewBox="0 0 9 11"><path d="M1 .3h7v9.6h.8v.9H.2v-.9H1z" fill="#2389c6"/><g fill="#eef7fd"><rect x="2.3" y="1.7" width="1.5" height="1.4"/><rect x="5.2" y="1.7" width="1.5" height="1.4"/><rect x="2.3" y="4.1" width="1.5" height="1.4"/><rect x="5.2" y="4.1" width="1.5" height="1.4"/><rect x="3.5" y="7" width="2" height="3"/></g></svg><span>ค่าเช่า</span></div>
<div class="c amt">15,700.00</div>
<div class="info"><svg width="10" height="10" viewBox="0 0 10 10"><circle cx="5" cy="5" r="5" fill="#2389c6"/><rect x="4.1" y="4.1" width="1.8" height="3.8" fill="#fff"/><circle cx="5" cy="2.6" r="1" fill="#fff"/></svg></div>
<div class="st paid"><span>ชำระเงินแล้ว</span><svg class="chev" width="8" height="5.4" viewBox="0 0 9 6"><path d="M1 1l3.5 3.5L8 1" fill="none" stroke="#3aa335" stroke-width="1.8" stroke-linecap="round" stroke-linejoin="round"/></svg></div>
<div class="more"><i></i><i></i><i></i></div>
</div>
<div class="row" style="top:692.34px;height:68.33px">
<div class="cb"></div>
<div class="thumb"><svg width="30" height="23" viewBox="0 0 30 23"><rect x="1.5" y="1.5" width="27" height="20" rx="1.8" fill="none" stroke="#a5abb8" stroke-width="3"/><circle cx="7.6" cy="7.6" r="2.2" fill="#a5abb8"/><path d="M5.6 17V14.6l2.8-2.6 2.6 2.4 7.6-7.4 5.8 5.6V17z" fill="#a5abb8"/></svg></div>
<div class="c date">08-07-2025</div>
<div class="dot gray"></div>
<div class="c doc"><span>EXP2025070002</span></div>
<div class="c ven">Support Equipment Co.,Ltd.</div>
<div class="cat" style="background:rgba(31,122,53,.05);color:#1f7a35"><svg width="10" height="11" viewBox="0 0 10 11"><circle cx="5" cy="2.9" r="2.5" fill="#1f7a35"/><path d="M0.6 10.6v-1.4c0-1.7 1.5-2.9 3-2.9h2.8c1.5 0 3 1.2 3 2.9v1.4z" fill="#1f7a35"/></svg><span>บริการทั่วไป/ฟรีแลนซ์</span></div>
<div class="c amt">364.00</div>
<div class="usd">USD</div>
<div class="st pend"><span>รอดำเนินการ</span><svg class="chev" width="8" height="5.4" viewBox="0 0 9 6"><path d="M1 1l3.5 3.5L8 1" fill="none" stroke="#1f2430" stroke-width="1.8" stroke-linecap="round" stroke-linejoin="round"/></svg></div>
<div class="more"><i></i><i></i><i></i></div>
</div>
<div id="thead">
  <svg style="position:absolute;left:8.5px;top:5.5px" width="13" height="13" viewBox="0 0 14 14"><rect x=".9" y=".9" width="12.2" height="12.2" rx="2.3" fill="#1a7fbd" stroke="#fff" stroke-width="1.5"/><rect x="1.5" y="5.7" width="11" height="2.6" fill="#fff"/></svg>
  <span style="left:91px">วันที่</span>
  <span style="left:179px">เลขที่เอกสาร</span>
  <span style="left:795px">หมวดหมู่</span>
  <span style="left:979px">ยอดรวมสุทธิ</span>
  <span style="left:1107px">สถานะ</span>
</div>
<div id="pgline"></div><div style="position:absolute;left:263px;top:770px;width:1305px;height:35px;background:#fff"></div>
<div class="pg ar" style="left:273.5px"><svg width="25" height="26" viewBox="0 0 25 26"><path d="M9.3 10.2v5.6" stroke="#3c4350" stroke-width="1.3"/><path d="M14.8 10.2l-3.6 2.8 3.6 2.8z" fill="#3c4350"/></svg></div>
<div class="pg ar" style="left:302px"><svg width="25" height="26" viewBox="0 0 25 26"><path d="M13.4 10.4L10.6 13l2.8 2.6" fill="none" stroke="#3c4350" stroke-width="1.2"/></svg></div>
<div class="pg on" style="left:330.500px">1</div>
<div class="pg" style="left:358.800px">2</div>
<div class="pg" style="left:387.200px">3</div>
<div class="pg" style="left:415.500px">4</div>
<div class="pg" style="left:443.900px">5</div>
<div class="pg ar" style="left:472.200px"><svg width="25" height="26" viewBox="0 0 25 26"><path d="M10.6 10.4l2.8 2.6-2.8 2.6" fill="none" stroke="#3c4350" stroke-width="1.2"/></svg></div>
<div class="pg ar" style="left:500.600px"><svg width="25" height="26" viewBox="0 0 25 26"><path d="M14.7 10.2v5.6" stroke="#3c4350" stroke-width="1.3"/><path d="M9.2 10.2l3.6 2.8-3.6 2.8z" fill="#3c4350"/></svg></div>
<div id="perpage">รายการต่อหน้า</div>
<div id="psel"><span>20</span><svg width="8" height="5.4" viewBox="0 0 9 6"><path d="M1 1l3.5 3.5L8 1" fill="none" stroke="#1f2430" stroke-width="1.8" stroke-linecap="round" stroke-linejoin="round"/></svg></div>
<div id="total">แสดงยอดรวมทั้งหมด</div>

<div id="menu"><svg width="14" height="14" viewBox="0 0 14 14"><circle cx="7" cy="7" r="6.3" fill="#fff" stroke="#f0142c" stroke-width="1.1"/><ellipse cx="7" cy="10.7" rx="2.7" ry=".7" fill="#b4bcbc"/><path d="M6.5 10.4V8.1C4.7 7.9 3.5 6.3 3.4 3.8c1.7.2 2.9 1 3.5 2.4C7.5 4.9 8.6 4 10.4 3.9c0 1.2-.4 2.1-1.2 2.7.5 0 .9-.1 1.3-.3-.3 1.5-1.4 2.2-2.9 2.2v1.9z" fill="#17a34a"/></svg><span>K-Cash Connect Plus</span></div>
<div id="red"></div>
<div id="chat"><svg width="20" height="15" viewBox="0 0 20 15"><path d="M4.5.5h11c2.2 0 4 1.8 4 4v6c0 2.2-1.8 4-4 4H.5v-10c0-2.2 1.8-4 4-4z" fill="#fff"/><path d="M4.6 5.5h11M4.6 9.3h7" stroke="#258bc6" stroke-width="1.3" stroke-linecap="round"/></svg></div>
</body>
</html>
